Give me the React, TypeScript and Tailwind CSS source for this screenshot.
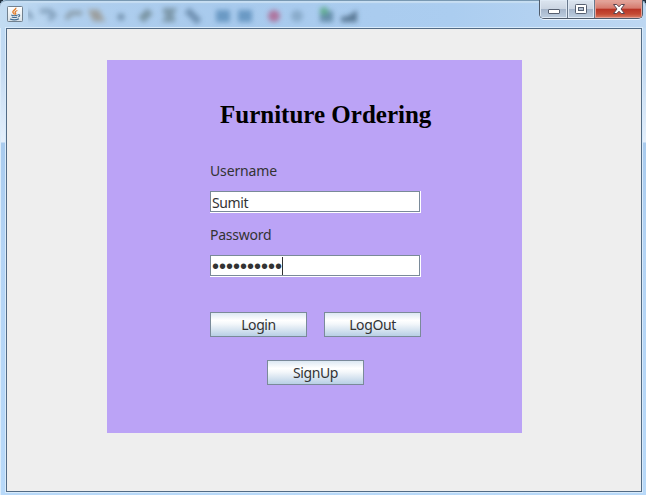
import React from "react";

function BlurredToolbar() {
  return (
    <svg className="block h-[27px] w-[350px]" viewBox="28 0 350 27">
      <defs>
        <filter id="soft" x="-10%" y="-50%" width="120%" height="200%">
          <feGaussianBlur stdDeviation="2.4" />
        </filter>
      </defs>
      <g filter="url(#soft)" opacity="0.68">
        <path d="M27 11l5 8" stroke="#5f7d98" strokeWidth="4" />
        <path d="M40 11h10l4 4-5 5" stroke="#6f8da8" strokeWidth="5" fill="none" />
        <path d="M66 19l5-6h11" stroke="#7d8b93" strokeWidth="5" fill="none" />
        <path d="M90 11h8l5 9h-9z" fill="#8d8377" stroke="#9a9182" strokeWidth="3" />
        <circle cx="121" cy="17" r="3.5" fill="#56758f" />
        <path d="M141 20l9-9" stroke="#647b82" strokeWidth="8" />
        <path d="M163 11h9l-5 8h8" stroke="#68808b" strokeWidth="6" fill="none" />
        <path d="M187 10l12 12" stroke="#557696" strokeWidth="7" />
        <rect x="216" y="10" width="14" height="12" fill="#4e82b1" />
        <rect x="238" y="10" width="14" height="12" fill="#4e82b1" />
        <circle cx="274" cy="16" r="6" fill="#b14d79" />
        <circle cx="297" cy="16" r="6" fill="#7a9cba" />
        <rect x="320" y="11" width="13" height="11" fill="#47718b" />
        <circle cx="324" cy="11" r="4" fill="#3fa063" />
        <path d="M341 22v-5l7-1 9-6v12z" fill="#36526c" />
      </g>
    </svg>
  );
}

function JavaIcon() {
  return (
    <svg className="block h-4 w-4" viewBox="0 0 16 16">
      <defs>
        <linearGradient id="java-bg" x1="0" y1="0" x2="0" y2="1">
          <stop offset="0" stopColor="#ffffff" />
          <stop offset="1" stopColor="#d9e2e8" />
        </linearGradient>
      </defs>
      <rect x="0.5" y="0.5" width="15" height="15" rx="0.8" fill="url(#java-bg)" stroke="#71818f" />
      <path d="M9 1.8C9 4 5.4 4.3 5.8 6.2c.2 1 1.8 1.3 1.4 2.4M10.4 4.5C8 5.2 7.5 6.2 8.6 7.2c.4.6 0 1-.4 1.4" fill="none" stroke="#e07d2c" strokeWidth="1.3" />
      <path d="M4.2 9c1.5.7 4.8.7 6.5 0M4.8 11c1.5.6 4 .6 5.4 0M3 13c2.4.9 6.8.8 9-.3M11 8.8c2.2-.6 2.3 1.4.2 2.1" fill="none" stroke="#426c91" strokeWidth="1.1" />
    </svg>
  );
}

function WindowControls() {
  return (
    <div className="mr-[3px] flex h-[19px] w-[104px] overflow-hidden rounded-b-[5px] border border-t-0 border-[#4f5b6b] shadow-[0_1px_0_#eaf4ff]">
      <div className="flex w-[28px] items-center justify-center border-r border-[#68788c] bg-[linear-gradient(#dce5ef_0%,#cbd5e2_48%,#a4b4c9_50%,#bdcee1_100%)] shadow-[inset_0_0_0_1px_#dfe9f4]">
        <svg className="h-[18px] w-[14px]" viewBox="0 0 14 18">
          <rect x="1.5" y="9.5" width="11" height="4" rx="0.5" fill="#fff" stroke="#555f70" />
        </svg>
      </div>
      <div className="flex w-[27px] items-center justify-center border-r border-[#68788c] bg-[linear-gradient(#dce5ef_0%,#cbd5e2_48%,#a4b4c9_50%,#bdcee1_100%)] shadow-[inset_0_0_0_1px_#dfe9f4]">
        <svg className="h-[18px] w-[14px]" viewBox="0 0 14 18">
          <rect x="1.5" y="4.5" width="11" height="9" rx="0.8" fill="#fff" stroke="#555f70" />
          <rect x="4.5" y="7.5" width="5" height="3" fill="#b4c1d2" stroke="#555f70" />
        </svg>
      </div>
      <div className="flex flex-1 items-center justify-center bg-[linear-gradient(#e3aaa0_0%,#d67a6d_46%,#b83425_50%,#c44a34_78%,#d98268_100%)] shadow-[inset_0_0_0_1px_#e5a196]">
        <svg className="h-[18px] w-[14px]" viewBox="0 0 14 18">
          <path d="M1.5 4.5h3.3L7 6.8l2.2-2.3h3.3L9 9l3.5 4.5H9.2L7 11.2l-2.2 2.3H1.5L5 9z" fill="#fff" stroke="#5a4550" strokeWidth="1" />
        </svg>
      </div>
    </div>
  );
}

function Field({ children }: { children: React.ReactNode }) {
  return (
    <div className="h-[22px] w-[211px] border-b border-r border-white">
      <div className="flex h-[21px] w-[210px] items-center border border-[#7a8a99] bg-white pl-px">{children}</div>
    </div>
  );
}

function Button({ label }: { label: string }) {
  return (
    <button className="flex h-[25px] w-[97px] items-center justify-center border border-[#7a8a99] bg-[linear-gradient(#dde8f3_0%,#ffffff_32%,#f3f7fa_48%,#b8cfe5_100%)] pt-px text-[14px] leading-[20px] tracking-[-0.4px] text-[#333]">
      {label}
    </button>
  );
}

export default function App() {
  return (
    <div className="h-[495px] w-[646px] overflow-hidden bg-[#20303f] font-['Noto_Sans',sans-serif] text-[14px] text-[#333]">
      <div className="flex h-full flex-col rounded-t-[6px] bg-[linear-gradient(#b5d1ed_0px,#bfdaf3_28px,#c3daf2_65px,#e4effb_142px,#a9cbee_143px,#b4d4f5_250px,#b8d9f9_495px)] shadow-[inset_1px_1px_0_#dcecfa]">
        <div className="flex h-[28px] shrink-0 justify-between rounded-t-[6px] bg-[linear-gradient(90deg,#c3dcf2_0%,#b0cfee_10%,#a8caed_35%,#abcdf0_70%,#bdd7f2_100%)] shadow-[inset_0_1px_0_#7999b3,inset_0_3px_1px_#c7def2]">
          <div className="flex pl-[7px]">
            <div className="pt-[6px]"><JavaIcon /></div>
            <div className="pl-[5px]"><BlurredToolbar /></div>
          </div>
          <WindowControls />
        </div>
        <div className="ml-[6px] flex h-[464px] w-[636px] justify-start border border-[#526b85] bg-[#eee] pl-[100px] pt-[31px] shadow-[0_0_0_1px_#d9ebfb]">
          <div className="h-[373px] w-[415px] bg-[#bba3f6] pl-[103px]">
            <h1 className="h-[98px] whitespace-nowrap pl-[10px] pt-[40px] font-['Liberation_Serif',serif] text-[25px] font-bold leading-[30px] text-black">Furniture Ordering</h1>
            <div className="h-[33px] pt-[3px] leading-[20px] tracking-[-0.15px]">Username</div>
            <Field>
              <span className="pt-[2px] leading-[18px] tracking-[-0.4px]">Sumit</span>
            </Field>
            <div className="h-[42px] pt-[12px] leading-[20px] tracking-[-0.25px]">Password</div>
            <Field>
              <span className="pt-[2px] font-['Liberation_Sans',sans-serif] text-[20px] leading-[17px]">••••••••••</span>
              <span className="h-[18px] w-px bg-[#333]" />
            </Field>
            <div className="flex gap-[17px] pt-[35px]">
              <Button label="Login" />
              <Button label="LogOut" />
            </div>
            <div className="pl-[57px] pt-[23px]">
              <Button label="SignUp" />
            </div>
          </div>
        </div>
      </div>
    </div>
  );
}
